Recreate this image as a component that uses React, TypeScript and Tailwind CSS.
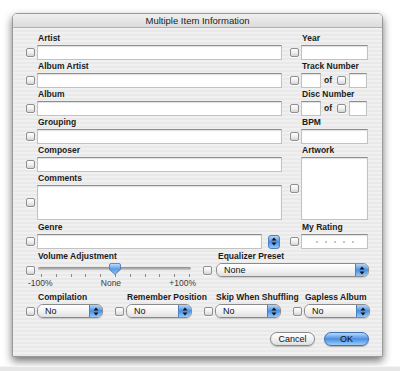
import React from 'react';

function Check({ className = '' }: { className?: string }) {
  return (
    <div
      className={`w-[9px] h-[9px] shrink-0 rounded-[2px] border border-[#8f8f8f] bg-gradient-to-b from-white via-[#f0f0f0] to-[#d4d4d4] shadow-[0_1px_0_rgba(255,255,255,0.8)] ${className}`}
    />
  );
}

function Field({ className = '', children }: { className?: string; children?: React.ReactNode }) {
  return (
    <div
      className={`bg-white border border-[#c2c2c2] border-t-[#8d8d8d] shadow-[inset_0_1px_1px_rgba(0,0,0,0.12)] ${className}`}
    >
      {children}
    </div>
  );
}

function Label({ children, className = 'h-[13px] leading-[13px]' }: { children: React.ReactNode; className?: string }) {
  return <div className={`pl-[12px] text-[8.5px] font-bold text-[#1c1c1c] whitespace-nowrap ${className}`}>{children}</div>;
}

function Arrows() {
  return (
    <svg width="6" height="9" viewBox="0 0 6 9">
      <path d="M0.5 3.6 L3 0.6 L5.5 3.6 Z" fill="#111" />
      <path d="M0.5 5.4 L3 8.4 L5.5 5.4 Z" fill="#111" />
    </svg>
  );
}

function Popup({ value, className = '' }: { value: string; className?: string }) {
  return (
    <div className={`flex h-[14px] rounded-[6px] border border-[#8a8a8a] overflow-hidden shadow-[0_1px_1px_rgba(0,0,0,0.15)] ${className}`}>
      <div className="flex-1 bg-gradient-to-b from-white via-[#f3f3f3] to-[#e0e0e0] pl-[7px] text-[9px] leading-[12px] text-[#111]">
        {value}
      </div>
      <div className="w-[13px] flex items-center justify-center border-l border-[#4f7fbf] bg-gradient-to-b from-[#b3d6f8] via-[#4a8fe2] to-[#93c8f6]">
        <Arrows />
      </div>
    </div>
  );
}

function TextRow({ label, wide = true, focus = false }: { label: string; wide?: boolean; focus?: boolean }) {
  return (
    <div>
      <Label>{label}</Label>
      <div className="flex items-center gap-[2px]">
        <Check />
        <Field
          className={`h-[15px] ${wide ? 'w-[245px]' : 'w-[67px]'} ${
            focus ? 'border-[#7d9fcc] shadow-[0_0_0_2px_#a9c6ea]' : ''
          }`}
        />
      </div>
    </div>
  );
}

function NumberRow({ label }: { label: string }) {
  return (
    <div>
      <Label>{label}</Label>
      <div className="flex items-center h-[15px]">
        <Check />
        <Field className="ml-[2px] w-[20px] h-[15px]" />
        <span className="ml-[3px] w-[9px] text-[8.5px] font-bold text-[#1c1c1c]">of</span>
        <Check className="ml-[4px]" />
        <Field className="ml-[3px] w-[18px] h-[15px]" />
      </div>
    </div>
  );
}

export default function App() {
  const ticks = Array.from({ length: 11 });
  const groups = [
    { label: 'Compilation', value: 'No' },
    { label: 'Remember Position', value: 'No' },
    { label: 'Skip When Shuffling', value: 'No' },
    { label: 'Gapless Album', value: 'No' },
  ];

  return (
    <div className="w-[400px] h-[371px] bg-white flex flex-col overflow-hidden font-['Liberation_Sans',Arial,sans-serif]">
      <div className="ml-[12px] mt-[13px] w-[371px] h-[344px] shrink-0 flex flex-col rounded-t-[5px] border border-[#9a9a9a] shadow-[0_4px_8px_rgba(0,0,0,0.55)] overflow-hidden">
        {/* Title bar */}
        <div className="h-[14px] shrink-0 bg-gradient-to-b from-[#f0f0f0] to-[#dcdcdc] border-b border-[#b0b0b0] text-center text-[9.5px] leading-[13px] text-[#222]">
          Multiple Item Information
        </div>

        {/* Body */}
        <div className="flex-1 pl-[13px] pr-[13px] pt-[4px] bg-[image:repeating-linear-gradient(180deg,#f0f0f0_0px,#f0f0f0_2px,#e9e9e9_2px,#e9e9e9_4px)]">
          <div className="flex gap-[8px]">
            {/* Left column */}
            <div className="w-[256px] flex flex-col">
              <TextRow label="Artist" focus />
              <TextRow label="Album Artist" />
              <TextRow label="Album" />
              <TextRow label="Grouping" />
              <TextRow label="Composer" />
              <div>
                <Label>Comments</Label>
                <div className="flex items-center gap-[2px]">
                  <Check />
                  <Field className="h-[35px] w-[245px]" />
                </div>
              </div>
              <div>
                <Label className="h-[14px] leading-[14px]">Genre</Label>
                <div className="flex items-center">
                  <Check />
                  <Field className="ml-[2px] h-[15px] w-[225px]" />
                  <div className="ml-[6px] w-[12px] h-[14px] rounded-[3px] border border-[#4f7fbf] flex items-center justify-center bg-gradient-to-b from-[#b3d6f8] via-[#4a8fe2] to-[#93c8f6]">
                    <Arrows />
                  </div>
                </div>
              </div>
            </div>

            {/* Right column */}
            <div className="w-[79px] flex flex-col">
              <TextRow label="Year" wide={false} />
              <NumberRow label="Track Number" />
              <NumberRow label="Disc Number" />
              <TextRow label="BPM" wide={false} />
              <div>
                <Label>Artwork</Label>
                <div className="flex items-center gap-[2px]">
                  <Check />
                  <Field className="h-[63px] w-[67px]" />
                </div>
              </div>
              <div>
                <Label className="h-[14px] leading-[14px]">My Rating</Label>
                <div className="flex items-center gap-[2px]">
                  <Check />
                  <Field className="h-[15px] w-[67px] flex items-center justify-center gap-[7px]">
                    {[0, 1, 2, 3, 4].map((i) => (
                      <span key={i} className="w-[2px] h-[2px] rounded-full bg-[#b5b5b5]" />
                    ))}
                  </Field>
                </div>
              </div>
            </div>
          </div>

          {/* Volume + Equalizer */}
          <div className="flex mt-[1px]">
            <div className="w-[177px]">
              <Label>Volume Adjustment</Label>
              <div className="flex items-center h-[11px]">
                <Check className="mt-[3px]" />
                <div className="ml-[3px] w-[153px] h-[11px] relative flex items-center">
                  <div className="w-full h-[3px] rounded-full bg-gradient-to-b from-[#8c8c8c] to-[#cfcfcf]" />
                  <svg className="absolute left-[71px] top-0" width="12" height="12" viewBox="0 0 12 12">
                    <defs>
                      <linearGradient id="thumb" x1="0" y1="0" x2="0" y2="1">
                        <stop offset="0" stopColor="#c9e2fb" />
                        <stop offset="0.5" stopColor="#5a9be6" />
                        <stop offset="1" stopColor="#8fc3f5" />
                      </linearGradient>
                    </defs>
                    <path
                      d="M2 0.5 H10 A1.5 1.5 0 0 1 11.5 2 V6.5 L6 11.5 L0.5 6.5 V2 A1.5 1.5 0 0 1 2 0.5 Z"
                      fill="url(#thumb)"
                      stroke="#4a72a8"
                      strokeWidth="0.8"
                    />
                  </svg>
                </div>
              </div>
              <div className="ml-[15px] w-[149px] h-[4px] flex justify-between">
                {ticks.map((_, i) => (
                  <span key={i} className="w-[1px] h-[3px] bg-[#8a8a8a]" />
                ))}
              </div>
              <div className="flex justify-between w-[168px] ml-[2px] text-[8.5px] leading-[10px] text-[#3a3a3a]">
                <span>-100%</span>
                <span>None</span>
                <span>+100%</span>
              </div>
            </div>
            <div className="flex-1">
              <Label className="h-[13px] leading-[13px] !pl-[15px]">Equalizer Preset</Label>
              <div className="flex items-center">
                <Check />
                <Popup value="None" className="ml-[4px] w-[153px]" />
              </div>
            </div>
          </div>

          {/* Bottom popups */}
          <div className="flex gap-[12px] mt-[3px]">
            {groups.map((g) => (
              <div key={g.label} className="w-[77px]">
                <Label>{g.label}</Label>
                <div className="flex items-center gap-[2px]">
                  <Check />
                  <Popup value={g.value} className="w-[66px]" />
                </div>
              </div>
            ))}
          </div>

          {/* Buttons */}
          <div className="flex justify-end gap-[9px] mt-[14px]">
            <button className="w-[45px] h-[14px] rounded-full border border-[#8a8a8a] bg-gradient-to-b from-white via-[#f2f2f2] to-[#dedede] text-[9px] leading-[12px] text-[#111] shadow-[0_1px_1px_rgba(0,0,0,0.2)]">
              Cancel
            </button>
            <button className="w-[45px] h-[14px] rounded-full border border-[#3f6fb3] bg-gradient-to-b from-[#b9dafb] via-[#4a8fe2] to-[#9ccdf8] text-[9px] leading-[12px] text-[#111] shadow-[0_1px_1px_rgba(0,0,0,0.25)]">
              OK
            </button>
          </div>
        </div>
      </div>
      <div className="mt-auto h-[5px] shrink-0 bg-[#e6e6e6] border-t border-[#f4f4f4]" />
    </div>
  );
}
